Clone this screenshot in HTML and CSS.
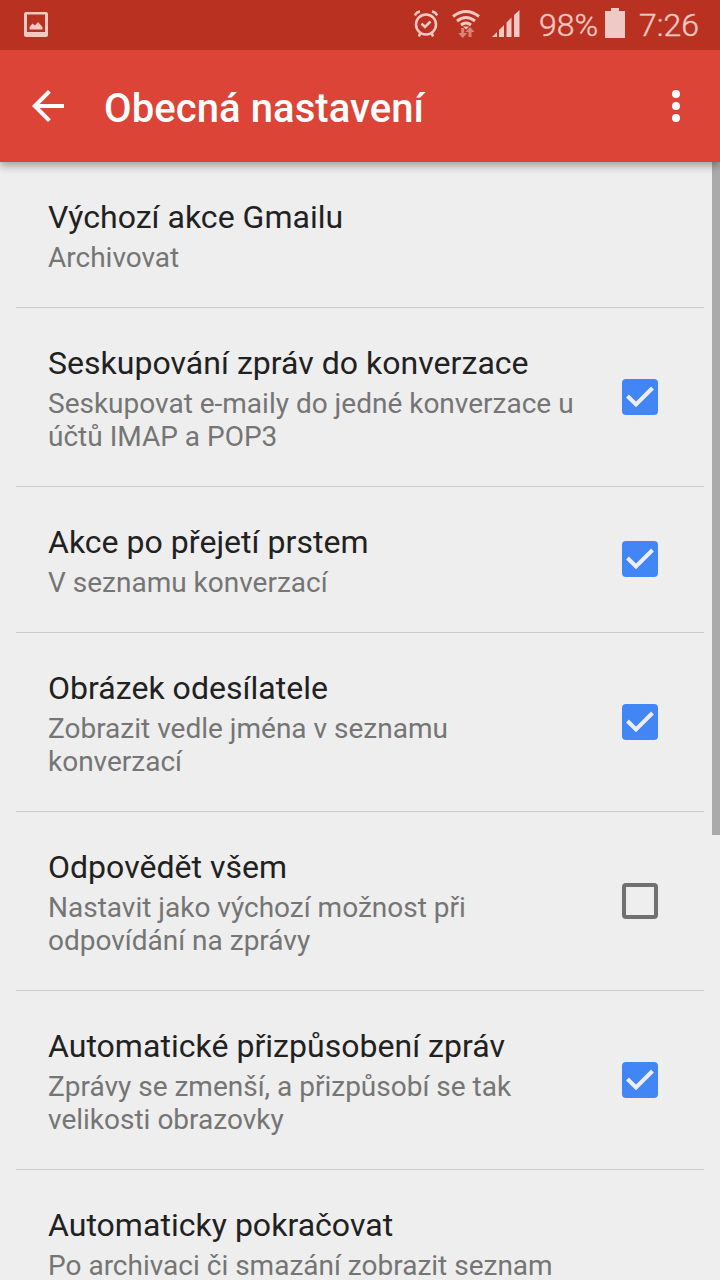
FILE: index.html
```
<!DOCTYPE html>
<html lang="cs">
<head>
<meta charset="utf-8">
<title>Obecná nastavení</title>
<link rel="stylesheet" href="styles.css">
</head>
<body>
<div class="screen">
  <div class="status">
    <svg class="pic" width="24" height="25" viewBox="0 0 24 25" fill="currentColor"><path fill-rule="evenodd" d="M2 0h20a2 2 0 0 1 2 2v21a2 2 0 0 1-2 2H2a2 2 0 0 1-2-2V2a2 2 0 0 1 2-2zM3 2.500v17.500h18V2.500z"/><path d="M5.500 17.500V15l3-3.500 2.500 2 3-3.500 4.500 5v2.500z"/></svg>
    <svg class="alarm" width="24" height="27" viewBox="0 0 24 27" fill="none" stroke="currentColor" stroke-width="2.500"><circle cx="12" cy="14.500" r="10"/><path d="M.8 5.500Q2.500 2 6 1.500M23.200 5.500Q21.500 2 18 1.500M6.500 22.500L5 26.500M17.500 22.500L19 26.500M7.500 13.500l3.500 3.500 5.500-5.500"/></svg>
    <svg class="wifi" width="28" height="28" viewBox="0 0 28 28" fill="none" stroke="currentColor" stroke-width="3"><path d="M1 6.500Q14-3.500 27 6.500M5 11Q14 4 23 11M9 15Q14 11 19 15"/><path d="M11 16.500h6L14 19.500z" fill="currentColor" stroke="none"/><path d="M9.200 18h3v5h3l-4.500 5L6.200 23h3zM16.500 27v-5h-3l4.500-5 4.500 5h-3v5z" fill="currentColor" stroke="none" opacity=".55"/></svg>
    <svg class="signal" width="28" height="27" viewBox="0 0 28 27" fill="currentColor"><path d="M0 27l5-5v5zM7 20l5-5v12H7zM14.500 12.500l5-5V27h-5zM22 5l5.500-5v27H22z"/></svg>
    <span class="percent">98%</span>
    <svg class="battery" width="20" height="30" viewBox="0 0 20 30" fill="currentColor"><path d="M6 0h8v3h6v27H0V3h6z"/></svg>
    <span class="time">7:26</span>
  </div>
  <header class="bar">
    <svg class="back" width="32" height="32" viewBox="0 0 32 32" fill="currentColor"><path d="M32 14H7.660L18.840 2.820 16 0 0 16l16 16 2.820-2.820L7.660 18H32z"/></svg>
    <h1 class="heading">Obecná nastavení</h1>
    <svg class="more" width="8" height="32" viewBox="0 0 8 32" fill="currentColor"><circle cx="4" cy="4" r="4"/><circle cx="4" cy="16" r="4"/><circle cx="4" cy="28" r="4"/></svg>
  </header>
  <main class="list">
    <div class="row"><div class="text"><div class="title">Výchozí akce Gmailu</div><div class="sub">Archivovat</div></div></div>
    <div class="row"><div class="text"><div class="title">Seskupování zpráv do konverzace</div><div class="sub">Seskupovat e-maily do jedné konverzace u<br>účtů IMAP a POP3</div></div><svg class="box on" viewBox="0 0 36 36"><path d="M5.500 17l8.500 8.500L30.500 9"/></svg></div>
    <div class="row single"><div class="text"><div class="title">Akce po přejetí prstem</div><div class="sub">V seznamu konverzací</div></div><svg class="box on" viewBox="0 0 36 36"><path d="M5.500 17l8.500 8.500L30.500 9"/></svg></div>
    <div class="row"><div class="text"><div class="title">Obrázek odesílatele</div><div class="sub">Zobrazit vedle jména v seznamu<br>konverzací</div></div><svg class="box on" viewBox="0 0 36 36"><path d="M5.500 17l8.500 8.500L30.500 9"/></svg></div>
    <div class="row"><div class="text"><div class="title">Odpovědět všem</div><div class="sub">Nastavit jako výchozí možnost při<br>odpovídání na zprávy</div></div><div class="box off"></div></div>
    <div class="row"><div class="text"><div class="title">Automatické přizpůsobení zpráv</div><div class="sub">Zprávy se zmenší, a přizpůsobí se tak<br>velikosti obrazovky</div></div><svg class="box on" viewBox="0 0 36 36"><path d="M5.500 17l8.500 8.500L30.500 9"/></svg></div>
    <div class="row"><div class="text"><div class="title">Automaticky pokračovat</div><div class="sub">Po archivaci či smazání zobrazit seznam</div></div></div>
  </main>
  <div class="scrollbar"></div>
</div>
</body>
</html>
```
FILE: styles.css
```
body { margin: 0; }
.screen { position: relative; display: flex; flex-direction: column; width: 720px; height: 1280px; overflow: hidden; background: #eee; font-family: Roboto, "Noto Sans", sans-serif; }
.status { position: relative; z-index: 3; flex: none; display: flex; align-items: flex-start; height: 50px; box-sizing: border-box; padding: 0 21px 0 24px; background: #b93221; color: #f4c8c3; }
.pic { margin-top: 12px; }
.alarm { margin: 10px 0 0 366px; }
.wifi { margin: 10px 0 0 14px; }
.signal { margin: 10px 0 0 12px; }
.percent, .time { font-size: 32px; line-height: 50px; white-space: nowrap; font-weight: 300; -webkit-text-stroke: .4px currentColor; }
.percent { margin-left: auto; }
.battery { margin: 8px 14px 0 7px; color: #eec9c6; }
.bar { position: relative; z-index: 2; flex: none; display: flex; align-items: center; height: 112px; box-sizing: border-box; padding: 0 40px 0 32px; background: #db4437; color: #fff; box-shadow: 0 4px 8px rgba(0,0,0,.32); }
.heading { flex: 1; margin: 5px 0 0 40px; font-size: 40px; line-height: 48px; font-weight: 500; letter-spacing: .08px; white-space: nowrap; }
.list { flex: 1; margin: 0 16px; }
.row { display: flex; justify-content: space-between; align-items: center; box-sizing: border-box; padding: 33px 46px 33px 32px; border-bottom: 1px solid #cdcdcd; }
.title { font-size: 32px; line-height: 44px; letter-spacing: .03px; color: #212121; white-space: nowrap; }
.sub { margin-top: 2px; font-size: 28px; line-height: 33px; color: #757575; white-space: nowrap; }
.box { flex: none; width: 36px; height: 36px; box-sizing: border-box; border-radius: 4px; }
.single .box { margin-bottom: 1px; }
.on { background: #4285f4; fill: none; stroke: #eee; stroke-width: 4; }
.off { border: 4px solid #707070; }
.scrollbar { position: absolute; right: 0; top: 162px; width: 8px; height: 673px; background: #aaa; }
```
